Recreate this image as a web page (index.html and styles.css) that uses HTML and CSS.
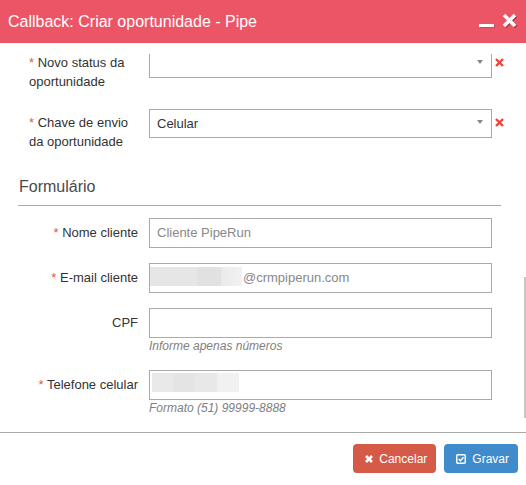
FILE: index.html
```html
<!DOCTYPE html>
<html lang="pt-BR">
<head>
<meta charset="utf-8">
<title>Callback: Criar oportunidade - Pipe</title>
<link rel="stylesheet" href="styles.css">
</head>
<body>
<div class="modal">
  <header class="modal-header">
    <h1 class="modal-title">Callback: Criar oportunidade - Pipe</h1>
    <div class="win-controls">
      <span class="win-min"></span>
      <svg class="win-close" viewBox="0 0 15 15" aria-label="Fechar"><path d="M2 2 L13 13 M13 2 L2 13"/></svg>
    </div>
  </header>

  <div class="modal-body">
    <div class="viewport">
      <form class="form">
        <div class="row row-top">
          <label class="label label-left required">Novo status da oportunidade</label>
          <div class="select"><span class="select-value"></span><span class="caret"></span></div>
          <svg class="clear" viewBox="0 0 9 9"><path d="M1 1 L8 8 M8 1 L1 8"/></svg>
        </div>

        <div class="row row-top">
          <label class="label label-left required">Chave de envio da oportunidade</label>
          <div class="select"><span class="select-value">Celular</span><span class="caret"></span></div>
          <svg class="clear" viewBox="0 0 9 9"><path d="M1 1 L8 8 M8 1 L1 8"/></svg>
        </div>

        <div class="legend">Formulário</div>

        <div class="row">
          <label class="label label-right required">Nome cliente</label>
          <div class="control">
            <div class="field">Cliente PipeRun</div>
          </div>
        </div>

        <div class="row">
          <label class="label label-right required">E-mail cliente</label>
          <div class="control">
            <div class="field field-email">
              <span class="redact redact-email"><i class="seg s1"></i><i class="seg s2"></i><i class="seg s3"></i></span>@crmpiperun.com
            </div>
          </div>
        </div>

        <div class="row">
          <label class="label label-right">CPF</label>
          <div class="control">
            <div class="field"></div>
            <div class="help">Informe apenas números</div>
          </div>
        </div>

        <div class="row">
          <label class="label label-right required">Telefone celular</label>
          <div class="control">
            <div class="field field-phone">
              <span class="redact redact-phone"><i class="seg t1"></i><i class="seg t2"></i><i class="seg t3"></i><i class="seg t4"></i></span>
            </div>
            <div class="help">Formato (51) 99999-8888</div>
          </div>
        </div>
      </form>
      <div class="scroll-thumb"></div>
    </div>
  </div>

  <footer class="modal-footer">
    <button type="button" class="btn btn-danger">
      <svg class="btn-icon icon-x" viewBox="0 0 8 8"><path d="M1 1 L7 7 M7 1 L1 7"/></svg>
      <span>Cancelar</span>
    </button>
    <button type="button" class="btn btn-primary">
      <svg class="btn-icon icon-check" viewBox="0 0 10 10"><rect x="0.75" y="0.75" width="8.5" height="8.5" rx="1"/><path d="M2.6 5 L4.4 6.8 L7.6 3.3"/></svg>
      <span>Gravar</span>
    </button>
  </footer>
</div>
</body>
</html>
```

FILE: styles.css
```css
html, body {
  margin: 0;
  padding: 0;
  background: #fff;
}

body {
  font-family: "Liberation Sans", Arial, sans-serif;
  color: #333;
}

.modal {
  width: 526px;
  height: 485px;
  display: flex;
  flex-direction: column;
  overflow: hidden;
}

/* Header */
.modal-header {
  flex: none;
  height: 43px;
  box-sizing: border-box;
  background: #ec5566;
  color: #fff;
  display: flex;
  align-items: center;
  padding: 0 9px 0 8px;
}

.modal-title {
  flex: 1;
  margin: 0;
  font-size: 16px;
  font-weight: normal;
  line-height: 18px;
}

.win-controls {
  display: flex;
  align-items: flex-end;
  gap: 8px;
  margin-bottom: 2px;
}

.win-min {
  display: block;
  width: 15px;
  height: 3px;
  margin-bottom: 1px;
  background: #fff;
  box-shadow: 1px 1px 0 rgba(0, 0, 0, 0.15);
}

.win-close {
  display: block;
  width: 15px;
  height: 15px;
  fill: none;
  stroke: #fff;
  stroke-width: 3.6;
  filter: drop-shadow(1px 1px 0 rgba(0, 0, 0, 0.35));
}

/* Body */
.modal-body {
  flex: 1;
  min-height: 0;
  padding-top: 11px;
  display: flex;
  flex-direction: column;
}

.viewport {
  flex: 1;
  min-height: 0;
  position: relative;
  overflow: hidden;
}

.form {
  margin: -5px 0 0;
  padding: 0 25px 0 18px;
}

.row {
  display: grid;
  grid-template-columns: 131px 343px 1fr;
  align-items: start;
  margin-bottom: 15px;
}

.row-top {
  margin-bottom: 18px;
}

.label {
  display: block;
  font-size: 13px;
  line-height: 18.5px;
  color: #333;
  padding: 5px 11px 0;
}

.label-right {
  text-align: right;
  padding: 6px 11px 0 0;
}

.required::before {
  content: "* ";
  color: #e3583f;
}

/* Select */
.select {
  position: relative;
  height: 29px;
  box-sizing: border-box;
  border: 1px solid #aaa;
  padding: 0 7px;
  display: flex;
  align-items: center;
  font-size: 13px;
  line-height: 18px;
  color: #333;
}

.caret {
  position: absolute;
  right: 8px;
  top: 10px;
  width: 0;
  height: 0;
  border-left: 3px solid transparent;
  border-right: 3px solid transparent;
  border-top: 4px solid #888;
}

.clear {
  width: 9px;
  height: 9px;
  margin: 9px 0 0 3px;
  fill: none;
  stroke: #f2433b;
  stroke-width: 2.4;
}

/* Legend */
.legend {
  font-size: 16px;
  line-height: 22px;
  color: #4a4a4a;
  padding: 7px 0 7px 1px;
  border-bottom: 1px solid #aaa;
  margin-bottom: 12px;
}

/* Text fields */
.field {
  height: 30px;
  box-sizing: border-box;
  border: 1px solid #aaa;
  padding: 0 7px;
  display: flex;
  align-items: center;
  font-size: 13px;
  line-height: 18px;
  color: #888;
  white-space: nowrap;
}

.field-email,
.field-phone {
  padding-left: 0;
}

.redact {
  display: flex;
  align-self: flex-start;
  height: 19px;
}

.redact-email {
  margin-top: 3px;
  margin-right: 1px;
}

.redact-phone {
  margin-top: 2px;
  margin-left: 2px;
}

.seg {
  display: block;
  height: 100%;
}

.s1 { width: 47px; background: #e6e6e6; }
.s2 { width: 24px; background: #e1e1e1; }
.s3 { width: 21px; background: linear-gradient(to right, #eaeaea, #f2f2f2); }

.t1 { width: 21px; background: #e9e9e9; }
.t2 { width: 22px; background: #e4e4e4; }
.t3 { width: 22px; background: #e8e8e8; }
.t4 { width: 22px; background: #f1f1f1; }

.help {
  font-size: 12px;
  font-style: italic;
  line-height: 17px;
  color: #808080;
}

.scroll-thumb {
  position: absolute;
  right: 0;
  top: 223px;
  width: 2px;
  height: 141px;
  background: #c6c6c6;
}

/* Footer */
.modal-footer {
  flex: none;
  border-top: 1px solid #aaa;
  padding: 11px 8px 12px;
  display: flex;
  justify-content: flex-end;
  gap: 8px;
}

.btn {
  height: 29px;
  border: 0;
  border-radius: 4px;
  color: #fff;
  font-family: "Liberation Sans", Arial, sans-serif;
  font-size: 12px;
  line-height: 1;
  padding: 0 9px 0 12px;
  display: inline-flex;
  align-items: center;
  gap: 6px;
  cursor: pointer;
}

.btn-danger {
  background: #d55a48;
}

.btn-primary {
  background: #3f8bcc;
}

.btn-icon {
  display: block;
  fill: none;
  stroke: #fff;
}

.icon-x {
  width: 8px;
  height: 8px;
  stroke-width: 2.6;
}

.icon-check {
  width: 10px;
  height: 10px;
  stroke-width: 1.4;
}
```
